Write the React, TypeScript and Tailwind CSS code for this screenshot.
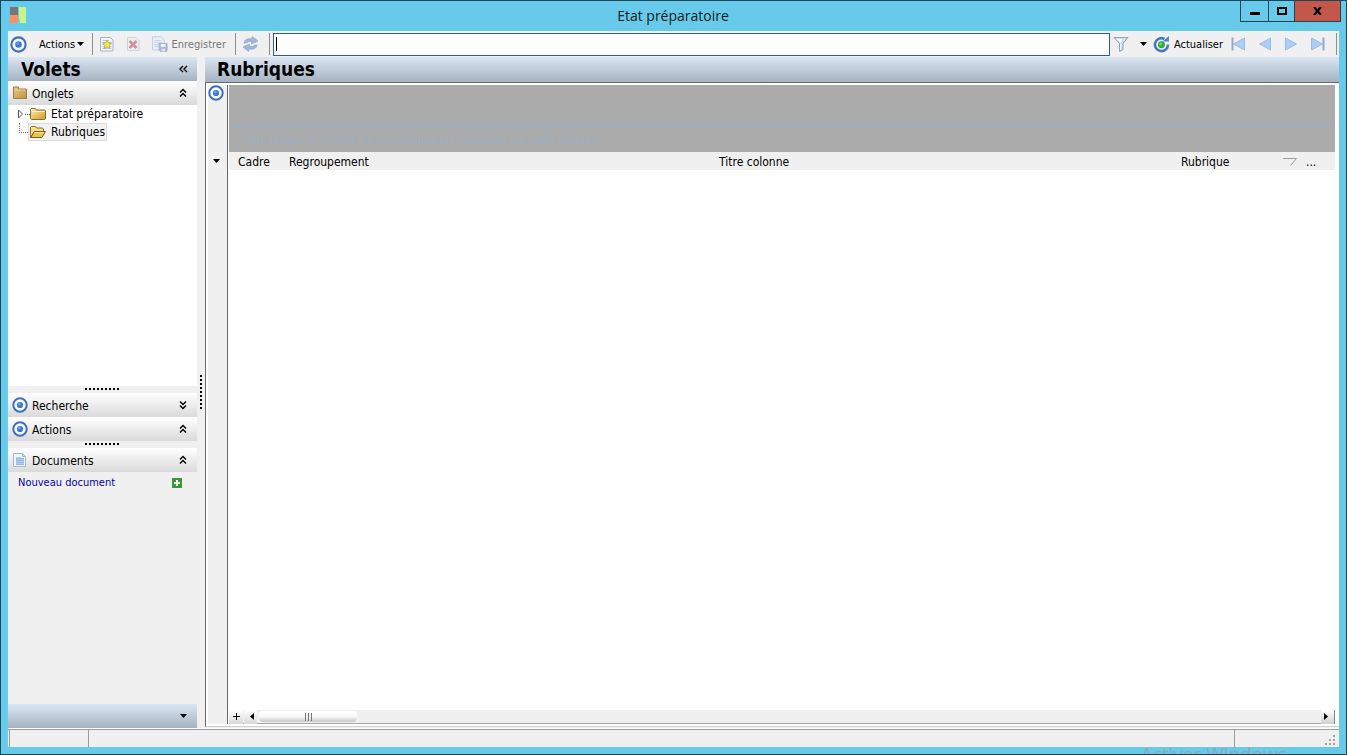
import React from 'react';

interface IconProps {
  className?: string;
}

const TargetIcon: React.FC<IconProps> = ({ className = 'size-4' }) => (
  <svg className={`shrink-0 ${className}`} viewBox="0 0 16 16" fill="none">
    <circle cx="8" cy="8" r="6.700" fill="#f7fafe" stroke="#416fbb" strokeWidth="2" />
    <circle cx="8" cy="8" r="3.100" fill="#3b78cc" />
    <circle cx="7.400" cy="7.200" r="1.400" fill="#6ba3e6" />
  </svg>
);

const FolderIcon: React.FC<IconProps> = ({ className = 'size-4' }) => (
  <svg className={`shrink-0 ${className}`} viewBox="0 0 16 16">
    <defs>
      <linearGradient id="folder" x1="0" y1="0" x2="1" y2="1">
        <stop offset="0" stopColor="#fdf0a8" />
        <stop offset="1" stopColor="#d29a24" />
      </linearGradient>
    </defs>
    <path d="M.5 12.500v-9l1-1h4l1 1.500h8l1 1v7.500l-1 1h-13z" fill="url(#folder)" stroke="#8d6d2b" />
    <path d="M1.500 5.500h13" stroke="#fff6c8" />
  </svg>
);

const TabFolderIcon = () => (
  <svg className="size-4 shrink-0" viewBox="0 0 16 16">
    <defs>
      <linearGradient id="tab-folder" x1="0" y1="0" x2="1" y2="1">
        <stop offset="0" stopColor="#e6c78a" />
        <stop offset="1" stopColor="#c1933d" />
      </linearGradient>
    </defs>
    <path d="M1.500 13.500v-11.500h5v2h8v9.500z" fill="url(#tab-folder)" stroke="#a17d42" />
    <path d="M2.500 5h11" stroke="#ecd19a" />
  </svg>
);

const OpenFolderIcon = () => (
  <svg className="size-4 shrink-0" viewBox="0 0 16 16">
    <path d="M.5 13.500v-10l1-1h4l1 1.500h6l1 1v2.500h-9z" fill="#f7df86" stroke="#8d6d2b" />
    <path d="M.8 13.500l3.500-6h11.200l-3.500 6z" fill="#eec450" stroke="#7d5e1f" />
    <path d="M5 8.500h8.500" stroke="#fff3b8" />
  </svg>
);

const PageIcon = () => (
  <svg className="size-4 shrink-0" viewBox="0 0 16 16">
    <path d="M1.500 1.500h9l3 3v10h-12z" fill="#eef5fd" stroke="#a3b6d3" />
    <path d="M10.500 1.500v3h3" fill="#c6d8ef" stroke="#a3b6d3" />
    <path d="M4 5h5v1h3v7h-8z" fill="#b5cff0" />
    <path d="M4 6.500h8M4 8.500h8M4 10.500h8M4 12.500h8" stroke="#94b6e4" />
  </svg>
);

const NewIcon = () => (
  <svg className="size-4" viewBox="0 0 16 16">
    <path d="M1.500 1.500h10l2.500 2.500v11h-12.500z" fill="#f0f6fd" stroke="#a3b3cb" />
    <path d="M4 4.500h6M3.500 6.500h9M3.500 8.500h9M3.500 10.500h9M3.500 12.500h9" stroke="#b7cce8" />
    <path d="M8 4l1.400 2.800 3.100.3-2.300 2.200.8 3.200-3-1.500-3 1.500.8-3.200-2.300-2.200 3.100-.3z" fill="#f6e552" stroke="#b9a545" strokeWidth=".8" />
  </svg>
);

const DeleteIcon = () => (
  <svg className="size-4 opacity-60" viewBox="0 0 16 16">
    <path d="M2.500 1.500h8.500l3 3v10h-11.500z" fill="#e9eff8" stroke="#b3bfd0" />
    <path d="M4.500 5l7 7M11.500 5l-7 7" stroke="#c8505f" strokeWidth="2.600" />
  </svg>
);

const SaveIcon = () => (
  <svg className="size-4 opacity-60" viewBox="0 0 16 16">
    <path d="M.5 .5h9l3 3v10.500h-12z" fill="#e6effa" stroke="#a3b6d3" />
    <path d="M2.500 4.500h7M2.500 6.500h7M2.500 8.500h5M2.500 10.500h5" stroke="#9dbce4" />
    <path d="M7.500 7.500h8v8h-7l-1-1z" fill="#8893c6" stroke="#7680b2" />
    <path d="M9 8h5v3h-5z" fill="#f3f5fb" />
    <path d="M10 13h3.500v2.500h-3.500z" fill="#dde1f2" />
  </svg>
);

const SyncIcon = () => (
  <svg className="h-4 w-[17px]" viewBox="0 0 17 16" fill="#9db8dc" stroke="#8aa6cd" strokeWidth=".7">
    <path d="M2 7c.5-3.500 4-5 8-4l.3-2.500 5.700 4.500-6.500 3 .3-2.200c-2.800-.8-4.500-.3-5.300 1.200z" />
    <path d="M15 9c-.5 3.500-4 5-8 4l-.3 2.500-5.700-4.500 6.500-3-.3 2.200c2.800.8 4.500.3 5.300-1.200z" />
  </svg>
);

const FilterIcon = () => (
  <svg className="size-4" viewBox="0 0 16 16">
    <path d="M1 1.500h14l-5 6v6l-3.500 2v-8z" fill="#cfdff3" stroke="#8da0bd" />
    <path d="M3.500 3h6l-2 4z" fill="#f8fbff" />
    <path d="M7.500 8v6" stroke="#f3f8fe" />
  </svg>
);

const RefreshIcon = () => (
  <svg className="size-[17px]" viewBox="0 0 17 17" fill="none">
    <path d="M15 8.500a6.500 6.500 0 1 1-3.500-5.600" stroke="#4378c4" strokeWidth="2.600" />
    <path d="M9.500 5.500l6.500 0v-5.500z" fill="#4c83ce" />
    <circle cx="8.500" cy="8.800" r="3.500" fill="#35ab3a" />
    <circle cx="7.600" cy="8" r="1.300" fill="#7ed67d" />
  </svg>
);

const NavIcon: React.FC<{ flip?: boolean; bar?: boolean }> = ({ flip, bar }) => (
  <svg className={flip ? 'size-4 -scale-x-100' : 'size-4'} viewBox="0 0 16 16">
    <path d="M2.500 2v12l11-6z" fill="#a9cff8" stroke="#9dbbe2" />
    {bar && <path d="M14.500 1.500v13" stroke="#94a9cb" strokeWidth="2" />}
  </svg>
);

const CaretDown = () => (
  <svg className="h-1 w-[7px] shrink-0" viewBox="0 0 7 4">
    <path d="M0 0h7L3.500 4z" />
  </svg>
);

const Chevrons: React.FC<{ direction: 'up' | 'down' | 'left' }> = ({ direction }) => {
  const paths = {
    up: 'M1 4.500l3-3 3 3M1 8.500l3-3 3 3',
    down: 'M1 1.500l3 3 3-3M1 5.500l3 3 3-3',
    left: 'M4 2l-3 3 3 3M8 2l-3 3 3 3',
  };
  return (
    <svg className="h-[10px] w-[9px]" viewBox="0 0 9 10" fill="none" stroke="#000" strokeWidth="1.400">
      <path d={paths[direction]} />
    </svg>
  );
};

const Separator = () => <div className="h-[22px] w-px shrink-0 bg-[#8f8f8f]" />;

const Grip = () => (
  <div className="flex h-[7px] justify-center bg-[#f0f0f0] pt-0.5">
    <div className="h-0.5 w-[35px] bg-[repeating-linear-gradient(90deg,#000_0_2px,transparent_2px_4px)]" />
  </div>
);

interface PaneHeaderProps {
  icon: React.ReactNode;
  title: string;
  direction: 'up' | 'down';
}

const PaneHeader: React.FC<PaneHeaderProps> = ({ icon, title, direction }) => (
  <button className="flex h-6 w-full shrink-0 items-center bg-linear-to-b from-white to-[#dadada] pr-[9px] pl-1 text-left text-xs">
    {icon}
    <span className="ml-1 flex-1 pt-0.5">{title}</span>
    <Chevrons direction={direction} />
  </button>
);

const TitleBar = () => (
  <header className="flex h-[30px] shrink-0 items-start pl-[9px]">
    <svg className="mt-1.5 size-4" viewBox="0 0 16 16">
      <path d="M0 0h8v8h-8z" fill="#77777b" />
      <path d="M0 8h8v8h-8z" fill="#fb905e" />
      <path d="M9 0h7v16h-6l-1-6z" fill="#c6f58e" />
    </svg>
    <h1 className="flex-1 pl-20 text-center font-['Open_Sans','Noto_Sans',sans-serif] text-[14px] leading-[29px] text-[#101c22]">
      Etat préparatoire
    </h1>
    <div className="mr-[5px] flex h-[21px] border-x border-b border-[#24434f]">
      <button aria-label="Réduire" className="flex w-[27px] justify-center pt-[11px]">
        <span className="h-[3px] w-[10px] bg-black" />
      </button>
      <button aria-label="Agrandir" className="flex w-[27px] justify-center border-x border-[#24434f] pt-1.5">
        <span className="h-2 w-[10px] border-2 border-black" />
      </button>
      <button aria-label="Fermer" className="flex w-[45px] justify-center bg-[#c3574c] pt-1.5">
        <svg className="h-2 w-[9px]" viewBox="0 0 9 8" stroke="#000" strokeWidth="2.200">
          <path d="M1 0l7 8M8 0l-7 8" />
        </svg>
      </button>
    </div>
  </header>
);

const Toolbar = () => (
  <div className="flex h-[26px] shrink-0 items-center bg-[#f0f0f0] pl-0.5 text-[11px]">
    <button aria-label="Menu" className="mr-3">
      <TargetIcon className="size-[17px]" />
    </button>
    <button className="flex w-[45px] items-center justify-between">
      <span className="pt-0.5">Actions</span>
      <CaretDown />
    </button>
    <div className="w-2" />
    <Separator />
    <button aria-label="Nouveau" className="ml-1.5"><NewIcon /></button>
    <button aria-label="Supprimer" className="ml-[10px]"><DeleteIcon /></button>
    <button className="ml-[11px] flex w-[74px] items-center gap-1 text-[#777]">
      <SaveIcon />
      <span className="pt-0.5">Enregistrer</span>
    </button>
    <div className="w-[9px]" />
    <Separator />
    <button aria-label="Synchroniser" className="mr-[10px] ml-1.5"><SyncIcon /></button>
    <Separator />
    <div className="relative ml-[3px] flex min-w-0 flex-1">
      <input
        aria-label="Filtre"
        className="h-[23px] w-full border border-[#2b5f93] bg-white px-0.5 outline-none"
      />
      <span className="pointer-events-none absolute top-1 left-[3px] h-[14px] w-px bg-black" />
    </div>
    <button aria-label="Filtrer" className="ml-[3px] flex items-center gap-[11px]">
      <FilterIcon />
      <CaretDown />
    </button>
    <button className="ml-1.5 flex w-[70px] items-center gap-1">
      <RefreshIcon />
      <span className="pt-0.5">Actualiser</span>
    </button>
    <div className="mr-[11px] ml-2 flex gap-[10px]">
      <button aria-label="Premier"><NavIcon flip bar /></button>
      <button aria-label="Précédent"><NavIcon flip /></button>
      <button aria-label="Suivant"><NavIcon /></button>
      <button aria-label="Dernier"><NavIcon bar /></button>
    </div>
    <Separator />
    <div className="w-0.5" />
  </div>
);

const Sidebar = () => (
  <aside className="flex w-[189px] shrink-0 flex-col">
    <div className="flex h-6 shrink-0 items-center justify-between bg-linear-to-b from-[#dbe6f3] to-[#a5b3c1] pr-[9px] pl-[13px]">
      <h2 className="text-[19px] leading-6 font-bold">Volets</h2>
      <button aria-label="Masquer les volets" className="flex"><Chevrons direction="left" /></button>
    </div>
    <PaneHeader icon={<TabFolderIcon />} title="Onglets" direction="up" />
    <ul className="h-[281px] shrink-0 bg-white text-xs">
      <li className="flex h-[18px] items-center pl-[10px]">
        <svg className="h-[10px] w-[12px]" viewBox="0 0 12 10" fill="none" stroke="#555">
          <path d="M.5 1v8l4-4z" />
          <path d="M7 5.500h5" strokeDasharray="1 1" />
        </svg>
        <FolderIcon />
        <span className="ml-[5px]">Etat préparatoire</span>
      </li>
      <li className="flex h-[18px] items-center pl-[11px]">
        <div className="mb-2 h-[10px] w-[9px] border-b border-l border-dotted border-[#777]" />
        <button className="flex h-[18px] items-center gap-[5px] border border-[#dcdcdc] bg-[#f2f2f2] px-px">
          <OpenFolderIcon />
          Rubriques
        </button>
      </li>
    </ul>
    <Grip />
    <PaneHeader icon={<TargetIcon />} title="Recherche" direction="down" />
    <PaneHeader icon={<TargetIcon />} title="Actions" direction="up" />
    <Grip />
    <PaneHeader icon={<PageIcon />} title="Documents" direction="up" />
    <div className="flex h-[22px] items-center justify-between pr-[15px] pl-[10px] text-[11px]">
      <a href="#nouveau" className="text-[#0000b0]">Nouveau document</a>
      <button aria-label="Ajouter un document">
        <svg className="size-[10px]" viewBox="0 0 10 10">
          <path d="M0 0h10v10h-10z" fill="#3d9638" />
          <path d="M5 2v6M2 5h6" stroke="#fff" strokeWidth="2" />
        </svg>
      </button>
    </div>
    <div className="mt-auto flex h-6 items-center justify-end bg-linear-to-b from-[#dbe6f3] to-[#a5b3c1] pr-[10px]">
      <CaretDown />
    </div>
  </aside>
);

const Grid = () => (
  <div className="flex min-w-0 flex-1 flex-col bg-white">
    <div className="h-[67px] shrink-0 bg-[#ababab] pt-10 pl-[3px]">
      <div className="mr-1 h-0.5 bg-[#99adc4]" />
      <p className="pt-1.5 pl-3 text-[11px] leading-4 text-[#9bafc6]">
        Faire glisser ici l'entête d'une colonne pour regrouper sur cette colonne.
      </p>
    </div>
    <table className="w-full table-fixed text-left text-xs">
      <thead>
        <tr className="h-[18px] bg-[#f0f0f0] [&>th]:p-0 [&>th]:pt-0.5 [&>th]:font-normal">
          <th className="w-[60px]"><span className="pl-[9px]">Cadre</span></th>
          <th className="w-[430px]">Regroupement</th>
          <th>Titre colonne</th>
          <th className="w-[125px]">
            <div className="flex items-center justify-between pr-[9px]">
              Rubrique
              <svg className="h-2 w-[14px]" viewBox="0 0 14 8" fill="none">
                <path d="M0 .5h13.500l-6 7" stroke="#9b9b9b" />
              </svg>
            </div>
          </th>
          <th className="w-[29px]">...</th>
        </tr>
      </thead>
    </table>
    <div className="mt-auto flex h-[14px] items-center border-b border-[#a5a5a5] bg-[#f0f0f0]">
      <button aria-label="Ajouter une ligne" className="flex h-[14px] w-[14px] items-center justify-center bg-linear-to-b from-white to-[#d8d8d8]">
        <svg className="size-[7px]" viewBox="0 0 7 7" stroke="#000">
          <path d="M3.500 0v7M0 3.500h7" />
        </svg>
      </button>
      <button aria-label="Défiler à gauche" className="ml-px flex h-[14px] w-[13px] items-center justify-end bg-linear-to-b from-white to-[#d8d8d8] pr-[3px]">
        <svg className="h-[7px] w-1" viewBox="0 0 4 7"><path d="M4 0v7l-4-3.500z" /></svg>
      </button>
      <div className="ml-0.5 flex h-[11px] w-[98px] items-center justify-center gap-0.5 rounded-sm bg-linear-to-b from-white via-[#fafafa] to-[#c6c6c6]">
        <i className="h-2 w-px bg-[#777]" />
        <i className="h-2 w-px bg-[#777]" />
        <i className="h-2 w-px bg-[#777]" />
      </div>
      <button aria-label="Défiler à droite" className="ml-auto flex h-[14px] w-[14px] items-center justify-center border-r border-[#888] bg-linear-to-b from-white to-[#d0d0d0] pr-1">
        <svg className="h-[7px] w-1" viewBox="0 0 4 7"><path d="M0 0v7l4-3.500z" /></svg>
      </button>
    </div>
  </div>
);

const MainPanel = () => (
  <main className="flex min-w-0 flex-1 flex-col">
    <h2 className="h-[25px] shrink-0 bg-linear-to-b from-[#dbe6f3] to-[#a5b3c1] pl-3 text-[19px] leading-6 font-bold">
      Rubriques
    </h2>
    <div className="mb-px flex flex-1 border-t border-b border-l border-[#6b6b6b] border-b-[#d0d0d0] bg-white py-0.5 pr-1 pl-0.5">
      <div className="mr-px flex w-5 shrink-0 flex-col items-center border-r border-[#666] bg-[#f0f0f0] pr-[3px]">
        <button aria-label="Options"><TargetIcon /></button>
        <button aria-label="Colonnes" className="mt-[54px] p-1"><CaretDown /></button>
      </div>
      <Grid />
    </div>
  </main>
);

const StatusBar = () => (
  <footer className="mt-px flex h-[18px] shrink-0 border-t border-[#9b9b9b] bg-[#f0f0f0] pl-px">
    <div className="w-20 border-x border-[#9b9b9b]" />
    <div className="flex-1 border-r border-[#9b9b9b]" />
    <div className="flex w-[104px] items-end justify-end pr-1 pb-0.5">
      <svg className="size-[10px]" viewBox="0 0 10 10" fill="#a0a0a0">
        <path d="M8 0h2v2h-2zM4 4h2v2h-2zM8 4h2v2h-2zM0 8h2v2h-2zM4 8h2v2h-2zM8 8h2v2h-2z" />
      </svg>
    </div>
  </footer>
);

const App = () => (
  <div className="relative flex h-screen flex-col overflow-hidden border border-[#1d4557] bg-[#67caea] font-['DejaVu_Sans_Condensed','Noto_Sans',sans-serif] text-black">
    <TitleBar />
    <div className="mx-[7px] mb-[7px] flex flex-1 flex-col bg-white">
      <Toolbar />
      <div className="flex flex-1 bg-[#f0f0f0]">
        <Sidebar />
        <div className="flex w-2 shrink-0 items-center justify-center">
          <div className="h-[35px] w-0.5 bg-[repeating-linear-gradient(180deg,#000_0_2px,transparent_2px_4px)]" />
        </div>
        <MainPanel />
      </div>
      <StatusBar />
    </div>
    <span className="absolute right-[59px] -bottom-3 font-['Open_Sans','Noto_Sans',sans-serif] text-[19px] leading-6 text-[#8ba9b8]">
      Activer Windows
    </span>
  </div>
);

export default App;
